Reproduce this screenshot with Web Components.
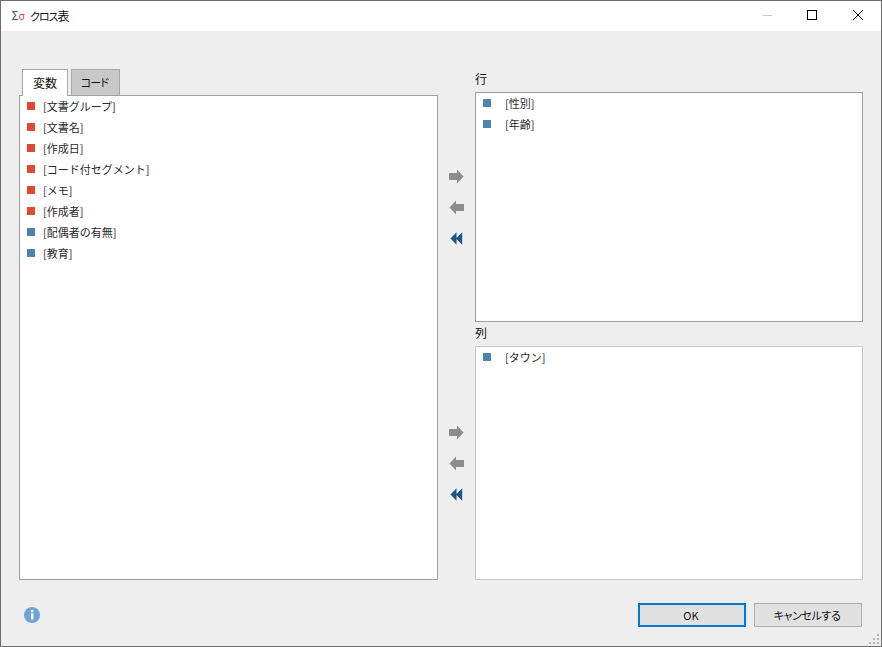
<!DOCTYPE html>
<html lang="ja">
<head>
<meta charset="utf-8">
<title>クロス表</title>
<style>
    html, body {
        margin: 0;
        height: 100%;
        background: #eeeeee;
        font-family: "Noto Sans CJK JP", "Noto Sans", sans-serif;
        font-feature-settings: "palt";
    }
</style>
</head>
<body>
<dialog-window caption="クロス">
    <div slot="left" style="display:contents">
        <tab-strip></tab-strip>
        <item-list kind="vars">
            <list-item color="red">[文書グループ]</list-item>
            <list-item color="red">[文書名]</list-item>
            <list-item color="red">[作成日]</list-item>
            <list-item color="red">[コード付セグメント]</list-item>
            <list-item color="red">[メモ]</list-item>
            <list-item color="red">[作成者]</list-item>
            <list-item color="blue">[配偶者の有無]</list-item>
            <list-item color="blue">[教育]</list-item>
        </item-list>
    </div>
    <drop-panel slot="right" label="行" style="--list-h:230px;--label-h:23px">
        <list-item color="blue" wide>[性別]</list-item>
        <list-item color="blue" wide>[年齢]</list-item>
    </drop-panel>
    <drop-panel slot="right" label="列" light style="--list-h:234px;--label-h:24px">
        <list-item color="blue" wide>[タウン]</list-item>
    </drop-panel>
</dialog-window>

<script>
class DialogWindow extends HTMLElement {
    connectedCallback() {
        this.attachShadow({ mode: 'open' });
        const caption = this.getAttribute('caption');
        this.shadowRoot.innerHTML = `
            <style>
                :host {
                    display: flex;
                    flex-direction: column;
                    position: relative;
                    box-sizing: border-box;
                    width: 882px;
                    height: 647px;
                    border: 1px solid #6e6e6e;
                    background: #eeeeee;
                    overflow: hidden;
                }
                .main {
                    display: flex;
                    padding: 38px 18px 0 18px;
                    height: 511px;
                    box-sizing: content-box;
                }
                .left {
                    display: flex;
                    flex-direction: column;
                    width: 419px;
                    flex: none;
                }
                .right {
                    display: flex;
                    flex-direction: column;
                    width: 425px;
                    flex: none;
                }
                .grip {
                    position: absolute;
                    right: 1px;
                    bottom: 1px;
                    display: block;
                }
            </style>
            <title-bar caption="${caption}"></title-bar>
            <div class="main">
                <div class="left"><slot name="left"></slot></div>
                <div class="right"><slot name="right"></slot></div>
            </div>
            <dialog-footer></dialog-footer>
            <svg class="grip" width="11" height="11" viewBox="0 0 11 11" fill="#b4b4b4">
                <rect x="8" y="0" width="2" height="2"/>
                <rect x="4" y="4" width="2" height="2"/><rect x="8" y="4" width="2" height="2"/>
                <rect x="0" y="8" width="2" height="2"/><rect x="4" y="8" width="2" height="2"/><rect x="8" y="8" width="2" height="2"/>
            </svg>
        `;
    }
}

class TitleBar extends HTMLElement {
    connectedCallback() {
        this.attachShadow({ mode: 'open' });
        this.shadowRoot.innerHTML = `
            <style>
                :host {
                    display: flex;
                    align-items: center;
                    height: 30px;
                    background: #ffffff;
                    flex: none;
                    color: #111;
                }
                .logo {
                    display: flex;
                    align-items: baseline;
                    width: 16px;
                    margin-left: 10px;
                    font-family: "DejaVu Sans", sans-serif;
                    line-height: 14px;
                    padding-top: 1px;
                }
                .logo .s { color: #2a5f8f; font-size: 12px; }
                .logo .o { color: #e04a32; font-size: 10px; }
                .text {
                    margin-left: 3px;
                    font-size: 12px;
                    flex: 1;
                    padding-bottom: 2px;
                }
                .kana { font-size: 11px; letter-spacing: -1px; }
                .ctl {
                    display: block;
                    flex: none;
                }
            </style>
            <span class="logo"><span class="s">Σ</span><span class="o">σ</span></span>
            <span class="text"><span class="kana">${this.getAttribute('caption')}</span>表</span>
            <svg class="ctl" width="121" height="30" viewBox="0 0 121 30" fill="none">
                <path d="M2 14.5H12" stroke="#cccccc"/>
                <rect x="47.5" y="9.5" width="9" height="9" stroke="#000"/>
                <path d="M93 9L103 19M103 9L93 19" stroke="#000"/>
            </svg>
        `;
    }
}

class TabStrip extends HTMLElement {
    connectedCallback() {
        this.attachShadow({ mode: 'open' });
        this.shadowRoot.innerHTML = `
            <style>
                :host {
                    display: flex;
                    align-items: flex-start;
                    gap: 3px;
                    height: 26px;
                    padding-left: 3px;
                    position: relative;
                    z-index: 1;
                    flex: none;
                    font-size: 12px;
                    color: #111;
                }
                .tab {
                    box-sizing: border-box;
                    display: flex;
                    align-items: center;
                    justify-content: center;
                    border: 1px solid #a8a8a8;
                    border-bottom: none;
                    height: 26px;
                    background: #c8c8c8;
                    padding-bottom: 1px;
                }
                .on {
                    width: 46px;
                    height: 27px;
                    background: #ffffff;
                    padding-bottom: 2px;
                }
                .off {
                    width: 49px;
                    font-size: 11px;
                    letter-spacing: -0.8px;
                    padding-right: 2px;
                }
            </style>
            <div class="tab on">変数</div>
            <div class="tab off">コード</div>
        `;
    }
}

class ItemList extends HTMLElement {
    connectedCallback() {
        this.attachShadow({ mode: 'open' });
        this.shadowRoot.innerHTML = `
            <style>
                :host {
                    display: block;
                    box-sizing: border-box;
                    background: #ffffff;
                    border: 1px solid var(--list-border, #a0a0a0);
                    flex: 1;
                    min-height: 0;
                }
            </style>
            <slot></slot>
        `;
    }
}

class ListItem extends HTMLElement {
    connectedCallback() {
        this.attachShadow({ mode: 'open' });
        const c = this.getAttribute('color') === 'red' ? '#e04a32' : '#4d84b2';
        const wide = this.hasAttribute('wide');
        this.shadowRoot.innerHTML = `
            <style>
                :host {
                    display: flex;
                    align-items: center;
                    box-sizing: border-box;
                    height: 21px;
                    padding-left: 7px;
                    padding-bottom: 1px;
                    font-size: 11px;
                    font-feature-settings: normal;
                    color: #2a2a2a;
                }
                .sq {
                    width: 8px;
                    height: 8px;
                    background: ${c};
                    flex: none;
                    margin-right: ${wide ? 14 : 8}px;
                }
            </style>
            <span class="sq"></span><slot></slot>
        `;
    }
}

class MoveButtons extends HTMLElement {
    connectedCallback() {
        this.attachShadow({ mode: 'open' });
        this.shadowRoot.innerHTML = `
            <style>
                :host {
                    display: flex;
                    flex-direction: column;
                    align-items: center;
                    justify-content: center;
                    gap: 16px;
                    width: 37px;
                    flex: none;
                    padding-right: 1px;
                    box-sizing: border-box;
                }
                svg { display: block; }
            </style>
            <svg width="15" height="15" viewBox="0 0 15 15"><path d="M0 4H8V0.5L14.5 7.5L8 14.5V11H0Z" fill="#8c8c8c"/></svg>
            <svg width="15" height="15" viewBox="0 0 15 15"><path d="M15 4H7V0.5L0.5 7.5L7 14.5V11H15Z" fill="#8c8c8c"/></svg>
            <svg width="15" height="15" viewBox="0 0 15 15"><path d="M1.5 7.5L7.5 1.2V13.8ZM7 7.5L13.2 1.2V13.8Z" fill="#1b5587"/></svg>
        `;
    }
}

class DropPanel extends HTMLElement {
    connectedCallback() {
        this.attachShadow({ mode: 'open' });
        const border = this.hasAttribute('light') ? '#c8c8c8' : '#a0a0a0';
        this.shadowRoot.innerHTML = `
            <style>
                :host {
                    display: block;
                    flex: none;
                }
                .label {
                    box-sizing: border-box;
                    height: var(--label-h);
                    display: flex;
                    align-items: flex-end;
                    padding-left: 37px;
                    padding-bottom: 4px;
                    font-size: 12px;
                    line-height: 18px;
                    color: #111;
                }
                .row {
                    display: flex;
                    height: var(--list-h);
                }
                item-list { --list-border: ${border}; }
            </style>
            <div class="label"><span>${this.getAttribute('label')}</span></div>
            <div class="row">
                <move-buttons></move-buttons>
                <item-list><slot></slot></item-list>
            </div>
        `;
    }
}

class PushButton extends HTMLElement {
    connectedCallback() {
        this.attachShadow({ mode: 'open' });
        const focused = this.hasAttribute('focused');
        this.shadowRoot.innerHTML = `
            <style>
                :host {
                    display: flex;
                    align-items: center;
                    justify-content: center;
                    box-sizing: border-box;
                    width: 108px;
                    height: 24px;
                    padding-bottom: 1px;
                    padding-right: 2px;
                    background: #e1e1e1;
                    border: ${focused ? '2px solid #0078d7' : '1px solid #adadad'};
                    font-size: 11px;
                    letter-spacing: ${focused ? '0' : '-0.4px'};
                    color: #111;
                }
            </style>
            <slot></slot>
        `;
    }
}

class DialogFooter extends HTMLElement {
    connectedCallback() {
        this.attachShadow({ mode: 'open' });
        this.shadowRoot.innerHTML = `
            <style>
                :host {
                    display: flex;
                    align-items: center;
                    gap: 8px;
                    padding: 23px 19px 0 23px;
                }
                svg { display: block; margin-right: auto; }
            </style>
            <svg width="16" height="16" viewBox="0 0 16 16">
                <circle cx="8" cy="8" r="8" fill="#6ca6d9"/>
                <rect x="7" y="3" width="2.4" height="2.2" fill="#fff"/>
                <rect x="7" y="6.4" width="2.4" height="6.2" fill="#fff"/>
            </svg>
            <push-button focused>OK</push-button>
            <push-button>キャンセルする</push-button>
        `;
    }
}

customElements.define('dialog-window', DialogWindow);
customElements.define('title-bar', TitleBar);
customElements.define('tab-strip', TabStrip);
customElements.define('item-list', ItemList);
customElements.define('list-item', ListItem);
customElements.define('move-buttons', MoveButtons);
customElements.define('drop-panel', DropPanel);
customElements.define('push-button', PushButton);
customElements.define('dialog-footer', DialogFooter);
</script>
</body>
</html>
